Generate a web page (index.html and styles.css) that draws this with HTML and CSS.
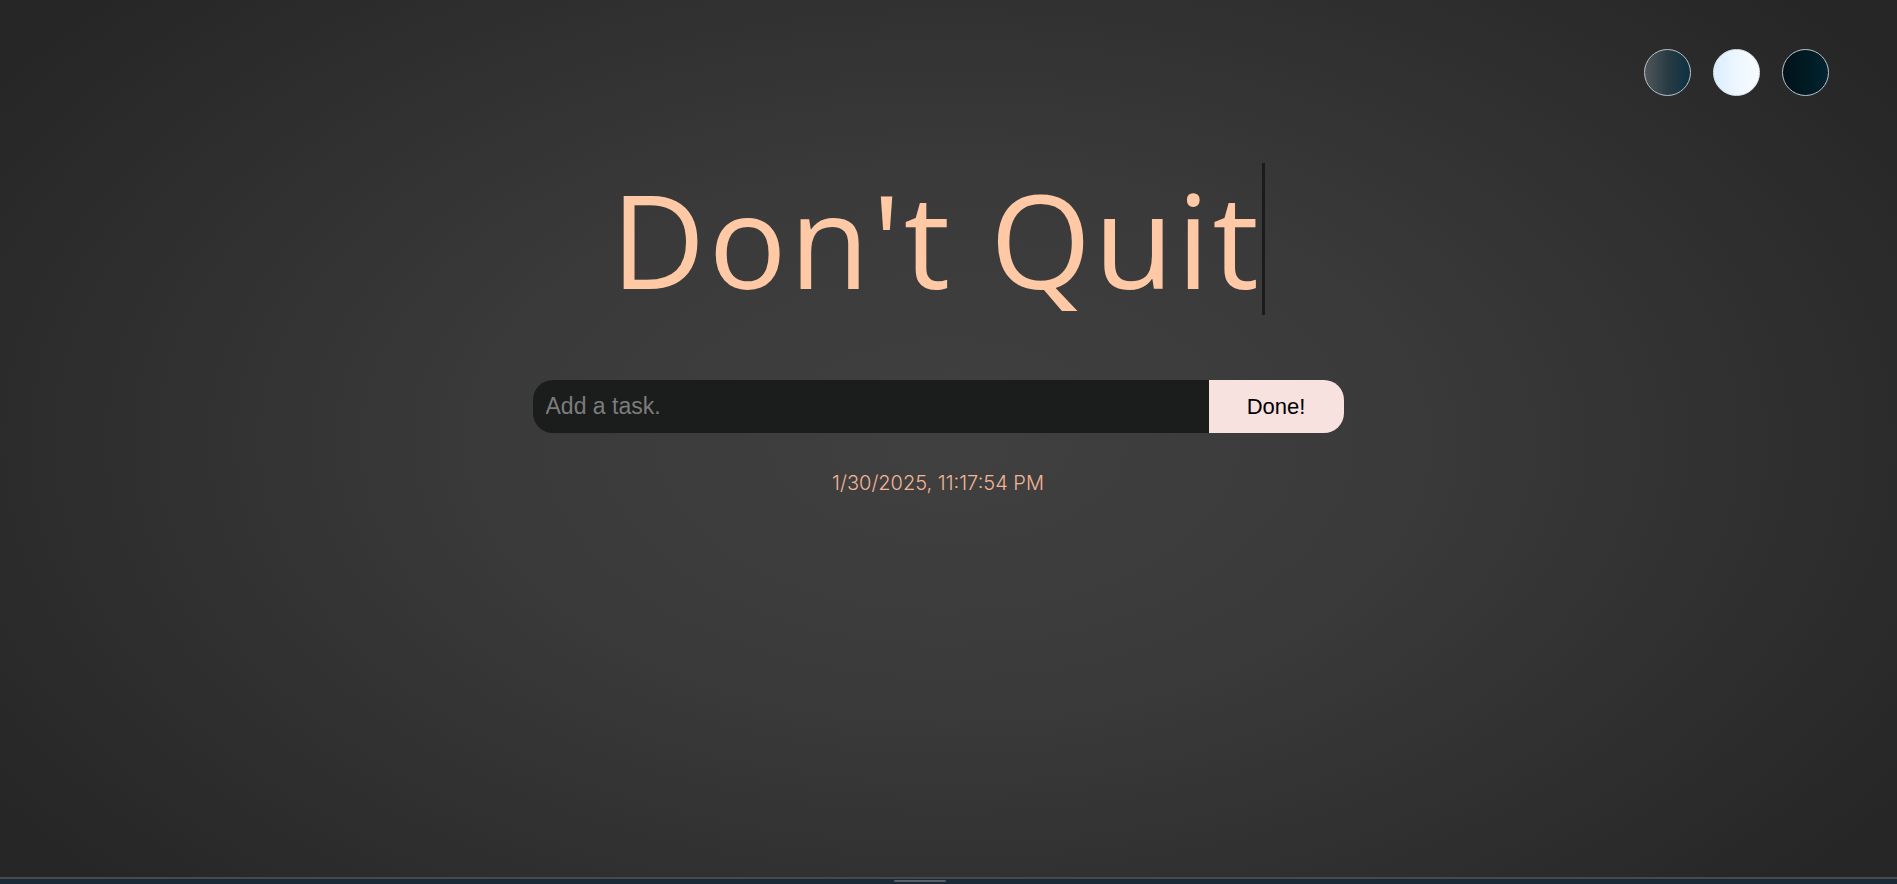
FILE: index.html
```html
<!DOCTYPE html>
<html lang="en">
<head>
<meta charset="utf-8">
<title>Don't Quit</title>
<link rel="stylesheet" href="styles.css">
</head>
<body>
<div class="page">
  <header class="themes">
    <button class="theme theme-slate" aria-label="Slate theme"></button>
    <button class="theme theme-light" aria-label="Light theme"></button>
    <button class="theme theme-dark" aria-label="Dark theme"></button>
  </header>
  <main class="main">
    <h1 class="title">Don't Quit</h1>
    <form class="task-form">
      <input class="task-input" type="text" placeholder="Add a task.">
      <button class="task-btn" type="button">Done!</button>
    </form>
    <p class="clock">1/30/2025, 11:17:54 PM</p>
  </main>
  <footer class="strip"><span class="strip-handle"></span></footer>
</div>
</body>
</html>
```
FILE: styles.css
```css
* { box-sizing: border-box; }
html, body { margin: 0; padding: 0; height: 100%; }
body {
  background: radial-gradient(ellipse 60% 75% at 50% 50%, #404040 0%, #3a3a3a 40%, #262626 100%);
  font-family: "Open Sans", sans-serif;
  overflow: hidden;
}
.page {
  height: 884px;
  display: flex;
  flex-direction: column;
}
.themes {
  display: flex;
  justify-content: flex-end;
  gap: 22px;
  padding: 49px 68px 0 0;
}
.theme {
  width: 47px;
  height: 47px;
  border-radius: 50%;
  border: 1px solid #b9c3c8;
  padding: 0;
  cursor: pointer;
}
.theme-slate { background: linear-gradient(90deg, #50565a 0%, #2a3b44 50%, #0e3142 100%); }
.theme-light { background: linear-gradient(90deg, #dceeff 0%, #eef7ff 55%, #f7fbff 100%); border-color: #dfe8ee; }
.theme-dark { background: linear-gradient(90deg, #00121a 0%, #011a22 50%, #022431 100%); }
.main {
  flex: 1;
  display: flex;
  flex-direction: column;
  align-items: center;
  padding-right: 21px;
}
.title {
  margin: 67px 0 0 0;
  font-family: "Open Sans", sans-serif;
  font-weight: 400;
  font-size: 130px;
  line-height: 152px;
  height: 152px;
  color: #ffc9a6;
  letter-spacing: 3px;
  border-right: 3px solid #1b1b1b;
  white-space: nowrap;
}
.task-form {
  margin-top: 65px;
  display: flex;
  width: 811px;
  height: 53px;
}
.task-input {
  flex: 1;
  border: none;
  outline: none;
  background: #1b1c1c;
  border-radius: 20px 0 0 20px;
  padding: 0 13px;
  font-family: "Liberation Sans", Arial, sans-serif;
  font-size: 23px;
  color: #ddd;
}
.task-input::placeholder { color: #7c7c7c; }
.task-btn {
  width: 135px;
  border: none;
  background: #f7e2e0;
  border-radius: 0 20px 20px 0;
  font-family: "Liberation Sans", Arial, sans-serif;
  font-size: 22px;
  color: #000;
  cursor: pointer;
}
.clock {
  margin: 37px 0 0 0;
  font-family: "Inter", sans-serif;
  font-weight: 300;
  font-size: 20px;
  line-height: 26px;
  color: #f2b596;
}
.strip {
  height: 7px;
  background: #1b2836;
  border-top: 2px solid #474a4d;
  display: flex;
  justify-content: center;
  padding-right: 58px;
}
.strip-handle {
  width: 52px;
  height: 2px;
  margin-top: 1px;
  background: #5a6068;
  border-radius: 1px;
}
```
